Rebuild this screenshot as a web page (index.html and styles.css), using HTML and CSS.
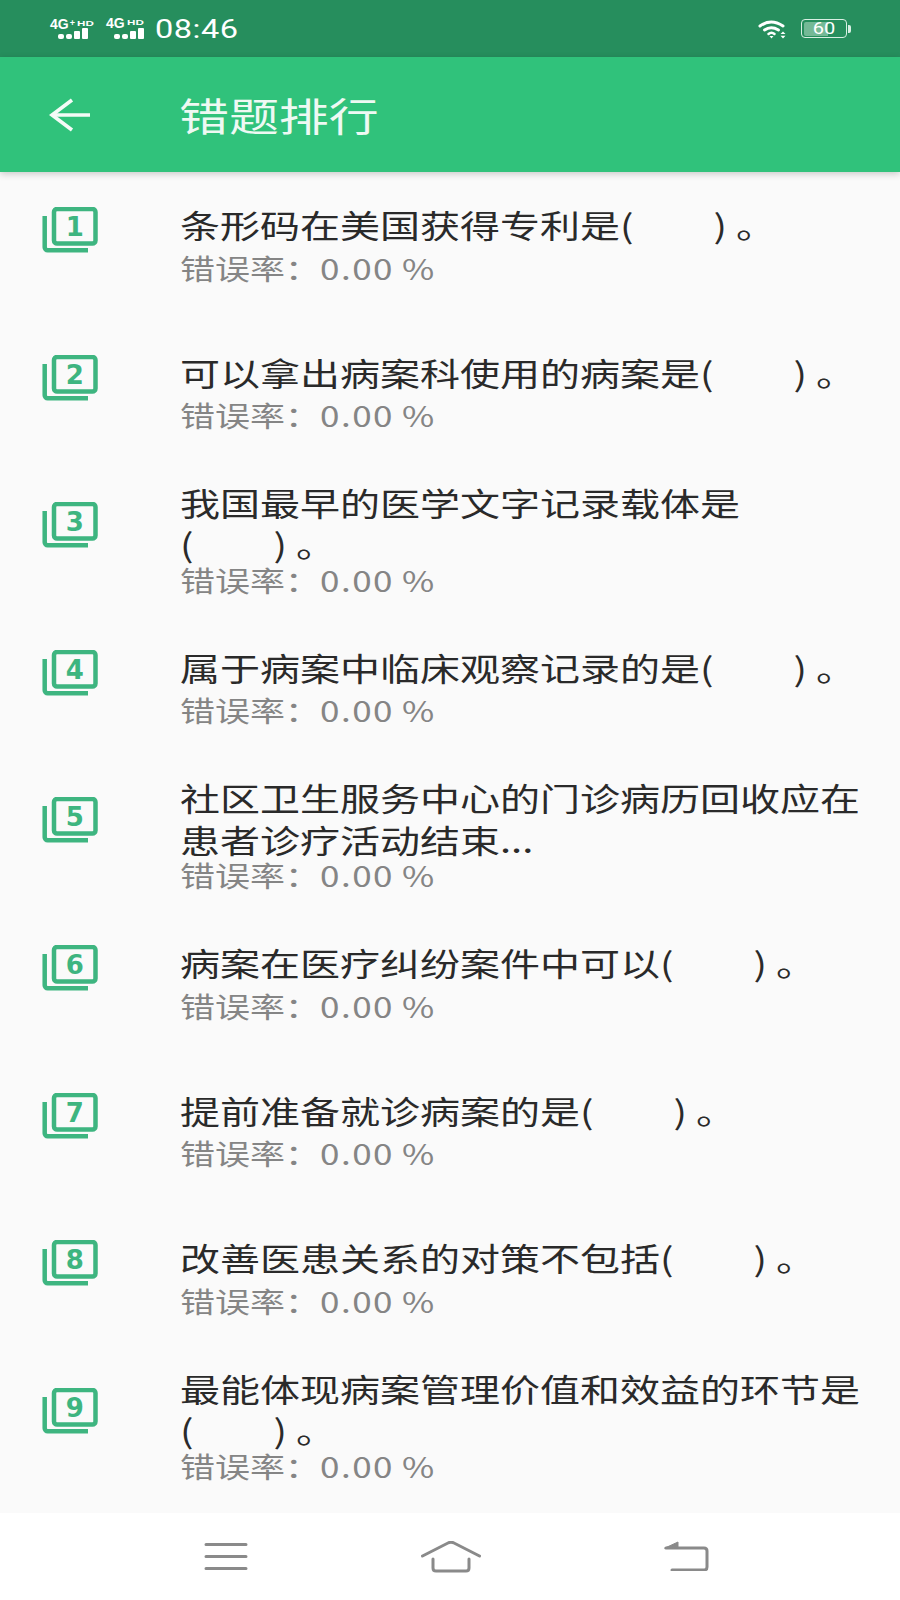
FILE: index.html
```html
<!DOCTYPE html>
<html lang="zh-CN">
<head>
<meta charset="utf-8">
<title>错题排行</title>
<link rel="stylesheet" href="styles.css">
</head>
<body>
<div class="phone">
  <header class="status">
    <div class="net">
      <span class="net-label">4G<span class="net-plus">+</span><span class="net-small">HD</span></span>
      <svg class="bars" width="30" height="11" viewBox="0 0 30 11"><rect x="0" y="6" width="6" height="5" rx="2"/><rect x="8" y="6" width="6" height="5" rx="2"/><rect x="16" y="3" width="6" height="8" rx="1"/><rect x="24" y="0" width="6" height="11" rx="1"/></svg>
    </div>
    <div class="net net-second">
      <span class="net-label">4G<span class="net-small">HD</span></span>
      <svg class="bars" width="30" height="11" viewBox="0 0 30 11"><rect x="0" y="6" width="6" height="5" rx="2"/><rect x="8" y="6" width="6" height="5" rx="2"/><rect x="16" y="3" width="6" height="8" rx="1"/><rect x="24" y="0" width="6" height="11" rx="1"/></svg>
    </div>
    <span class="clock">08:46</span>
    <svg class="wifi" width="31" height="19" viewBox="0 0 31 19" fill="none" stroke="#fff" stroke-linecap="round"><path d="M2 6Q13-2 25 6" stroke-width="3"/><path d="M6.500 10Q13 5.500 20.500 10" stroke-width="3"/><path d="M10.500 14Q13.500 11.500 16.500 14" stroke-width="2.500"/><path d="M11.500 16h4L13.500 18.500z" fill="#fff" stroke="none"/><path d="M25 11.500l2.500 2.500h-5zM25 18.500l2.500-2.800h-5z" fill="#fff" stroke="none"/></svg>
    <div class="battery"><span class="battery-fill"></span><span class="battery-text">60</span></div>
  </header>

  <div class="appbar">
    <svg class="back" width="42" height="34" viewBox="0 0 42 34" fill="none" stroke="#f4fbf7" stroke-width="3.600"><path d="M41 17H3"/><path d="M23 2L3 17l20 15"/></svg>
    <h1 class="appbar-title">错题排行</h1>
  </div>

  <main class="list">
    <article class="row one-line">
      <svg class="badge" width="58" height="48" viewBox="0 0 58 48"><path class="badge-back" d="M2.700 9v31.300a3 3 0 0 0 3 3H46"/><rect class="badge-front" x="12" y="2" width="41.500" height="34.500" rx="3"/><text class="badge-num" x="32.700" y="28.500">1</text></svg>
      <div class="text"><p class="title">条形码在美国获得专利是(<span class="blank"></span>) 。</p><p class="rate">错误率：<span class="rate-value">0.00</span> %</p></div>
    </article>
    <article class="row one-line">
      <svg class="badge" width="58" height="48" viewBox="0 0 58 48"><path class="badge-back" d="M2.700 9v31.300a3 3 0 0 0 3 3H46"/><rect class="badge-front" x="12" y="2" width="41.500" height="34.500" rx="3"/><text class="badge-num" x="32.700" y="28.500">2</text></svg>
      <div class="text"><p class="title">可以拿出病案科使用的病案是(<span class="blank"></span>) 。</p><p class="rate">错误率：<span class="rate-value">0.00</span> %</p></div>
    </article>
    <article class="row">
      <svg class="badge" width="58" height="48" viewBox="0 0 58 48"><path class="badge-back" d="M2.700 9v31.300a3 3 0 0 0 3 3H46"/><rect class="badge-front" x="12" y="2" width="41.500" height="34.500" rx="3"/><text class="badge-num" x="32.700" y="28.500">3</text></svg>
      <div class="text"><p class="title">我国最早的医学文字记录载体是<br>(<span class="blank"></span>) 。</p><p class="rate">错误率：<span class="rate-value">0.00</span> %</p></div>
    </article>
    <article class="row one-line">
      <svg class="badge" width="58" height="48" viewBox="0 0 58 48"><path class="badge-back" d="M2.700 9v31.300a3 3 0 0 0 3 3H46"/><rect class="badge-front" x="12" y="2" width="41.500" height="34.500" rx="3"/><text class="badge-num" x="32.700" y="28.500">4</text></svg>
      <div class="text"><p class="title">属于病案中临床观察记录的是(<span class="blank"></span>) 。</p><p class="rate">错误率：<span class="rate-value">0.00</span> %</p></div>
    </article>
    <article class="row">
      <svg class="badge" width="58" height="48" viewBox="0 0 58 48"><path class="badge-back" d="M2.700 9v31.300a3 3 0 0 0 3 3H46"/><rect class="badge-front" x="12" y="2" width="41.500" height="34.500" rx="3"/><text class="badge-num" x="32.700" y="28.500">5</text></svg>
      <div class="text"><p class="title">社区卫生服务中心的门诊病历回收应在<br>患者诊疗活动结束...</p><p class="rate">错误率：<span class="rate-value">0.00</span> %</p></div>
    </article>
    <article class="row one-line">
      <svg class="badge" width="58" height="48" viewBox="0 0 58 48"><path class="badge-back" d="M2.700 9v31.300a3 3 0 0 0 3 3H46"/><rect class="badge-front" x="12" y="2" width="41.500" height="34.500" rx="3"/><text class="badge-num" x="32.700" y="28.500">6</text></svg>
      <div class="text"><p class="title">病案在医疗纠纷案件中可以(<span class="blank"></span>) 。</p><p class="rate">错误率：<span class="rate-value">0.00</span> %</p></div>
    </article>
    <article class="row one-line">
      <svg class="badge" width="58" height="48" viewBox="0 0 58 48"><path class="badge-back" d="M2.700 9v31.300a3 3 0 0 0 3 3H46"/><rect class="badge-front" x="12" y="2" width="41.500" height="34.500" rx="3"/><text class="badge-num" x="32.700" y="28.500">7</text></svg>
      <div class="text"><p class="title">提前准备就诊病案的是(<span class="blank"></span>) 。</p><p class="rate">错误率：<span class="rate-value">0.00</span> %</p></div>
    </article>
    <article class="row one-line">
      <svg class="badge" width="58" height="48" viewBox="0 0 58 48"><path class="badge-back" d="M2.700 9v31.300a3 3 0 0 0 3 3H46"/><rect class="badge-front" x="12" y="2" width="41.500" height="34.500" rx="3"/><text class="badge-num" x="32.700" y="28.500">8</text></svg>
      <div class="text"><p class="title">改善医患关系的对策不包括(<span class="blank"></span>) 。</p><p class="rate">错误率：<span class="rate-value">0.00</span> %</p></div>
    </article>
    <article class="row">
      <svg class="badge" width="58" height="48" viewBox="0 0 58 48"><path class="badge-back" d="M2.700 9v31.300a3 3 0 0 0 3 3H46"/><rect class="badge-front" x="12" y="2" width="41.500" height="34.500" rx="3"/><text class="badge-num" x="32.700" y="28.500">9</text></svg>
      <div class="text"><p class="title">最能体现病案管理价值和效益的环节是<br>(<span class="blank"></span>) 。</p><p class="rate">错误率：<span class="rate-value">0.00</span> %</p></div>
    </article>
  </main>

  <nav class="navbar">
    <svg class="nav-icon nav-menu" width="44" height="30" viewBox="0 0 44 30"><path d="M2 2.500h40M2 14.500h40M2 26.500h40"/></svg>
    <svg class="nav-icon nav-home" width="60" height="32" viewBox="0 0 60 32"><path d="M1.500 15L27 2q3-1.500 6 0l25.500 13"/><path d="M12 18v9q0 3 3 3h30q3 0 3-3v-9"/></svg>
    <svg class="nav-icon nav-return" width="46" height="30" viewBox="0 0 46 30"><path d="M8 29h32q3 0 3-3V10q0-3-3-3H2"/><path class="nav-return-head" d="M1 7L14 1v6z"/></svg>
  </nav>
</div>
</body>
</html>
```

FILE: styles.css
```css
* { box-sizing: border-box; }

html, body { margin: 0; padding: 0; }

body {
  background: #fafafa;
  font-family: "Noto Sans CJK SC", "Noto Sans", sans-serif;
}

.phone {
  width: 900px;
  height: 1600px;
  display: flex;
  flex-direction: column;
  overflow: hidden;
}

/* Status bar */
.status {
  height: 57px;
  flex: none;
  background: #268e5d;
  color: #fff;
  display: flex;
  align-items: flex-start;
  padding: 18px 0 0 50px;
}

.net {
  width: 56px;
  display: flex;
  flex-direction: column;
  align-items: flex-start;
}

.net-second { width: 49px; }

.net-label {
  font: 700 14px/10px "Liberation Sans", sans-serif;
  white-space: nowrap;
  height: 10px;
}

.net-plus {
  font-size: 9px;
  vertical-align: 3px;
  margin-left: 1px;
}

.net-small {
  display: inline-block;
  font-size: 8px;
  line-height: 8px;
  vertical-align: 3px;
  margin-left: 2px;
  transform: scaleX(1.45);
  transform-origin: left;
}

.bars {
  fill: #fff;
  margin: 0 0 0 8px;
  display: block;
}

.clock {
  font: 400 26px/22px Roboto, sans-serif;
  letter-spacing: 0.4px;
  transform: scaleX(1.25);
  transform-origin: left;
  width: 603px;
  flex: none;
}

.wifi { flex: none; margin-top: 2px; }

.battery {
  position: relative;
  margin: 1px 0 0 12px;
  width: 46px;
  height: 19px;
  border: 1.500px solid #d8efe3;
  border-radius: 4px;
  display: flex;
  align-items: center;
  justify-content: center;
}

.battery::after {
  content: "";
  position: absolute;
  right: -4.500px;
  top: 4.500px;
  width: 2.500px;
  height: 8px;
  background: #d8efe3;
  border-radius: 0 2px 2px 0;
}

.battery-fill {
  position: absolute;
  left: 1.500px;
  top: 1.500px;
  bottom: 1.500px;
  width: 24px;
  background: #74b996;
  border-radius: 2px 0 0 2px;
}

.battery-text {
  position: relative;
  font: 400 16px/16px Roboto, sans-serif;
  color: #fff;
  transform: scaleX(1.25);
}

/* Title bar */
.appbar {
  height: 115px;
  flex: none;
  background: #30c27b;
  display: flex;
  align-items: center;
  padding-left: 49px;
  box-shadow: 0 2px 7px rgba(0, 0, 0, 0.2);
  position: relative;
  z-index: 1;
}

.back { flex: none; }

.appbar-title {
  margin: -2px 0 0 88px;
  font-size: 39px;
  font-weight: 400;
  line-height: 50px;
  color: #eef9f3;
  white-space: nowrap;
  transform: scaleX(1.28);
  transform-origin: left;
}

/* Question list */
.list {
  flex: 1;
  background: #fafafa;
}

.row {
  height: 147.600px;
  display: flex;
  align-items: flex-start;
  padding-left: 42px;
}

.badge {
  flex: none;
  margin-top: 35px;
  fill: none;
  stroke: #3eb580;
}

.badge-back { stroke-width: 4.500px; }
.badge-front { stroke-width: 4.500px; }

.badge-num {
  stroke: none;
  fill: #3eb580;
  font: 700 26px "DejaVu Sans", sans-serif;
  text-anchor: middle;
}

.text {
  height: 100%;
  margin-left: 80px;
  padding-bottom: 8px;
  display: flex;
  flex-direction: column;
  justify-content: center;
}

.title, .rate {
  margin: 0;
  white-space: nowrap;
  transform: scaleX(1.25);
  transform-origin: left;
}

.title {
  font-size: 32px;
  line-height: 41.500px;
  margin-bottom: 3px;
  color: #2a2a2a;
}

.one-line .title { margin-bottom: 10px; }

.rate {
  font-size: 28px;
  line-height: 24px;
  color: #858585;
}

.rate-value { letter-spacing: 1.200px; }

.blank {
  display: inline-block;
  width: 64px;
}

/* Navigation bar */
.navbar {
  height: 87px;
  flex: none;
  background: #fff;
  position: relative;
}

.nav-icon {
  position: absolute;
  fill: none;
  stroke: #8a8a8a;
  stroke-width: 3px;
  stroke-linecap: round;
}

.nav-menu { left: 204px; top: 29px; }
.nav-home { left: 421px; top: 28px; }
.nav-return { left: 664px; top: 28px; }
.nav-return-head { fill: #8a8a8a; stroke-width: 1px; }
```
